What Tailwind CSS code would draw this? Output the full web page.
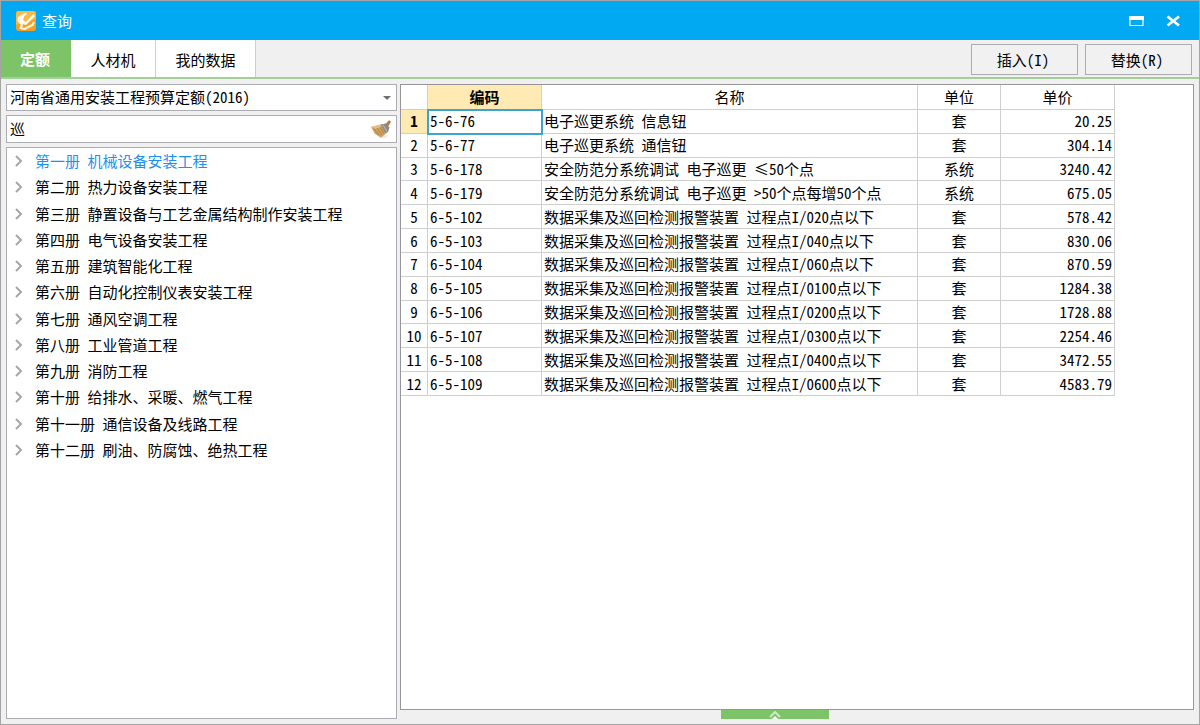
<!DOCTYPE html>
<html lang="zh-CN">
<head>
<meta charset="utf-8">
<meta name="viewport" content="width=device-width, initial-scale=1">
<title>查询</title>
<script src="https://cdn.jsdelivr.net/npm/@tailwindcss/browser@4"></script>
</head>
<body class="flex h-screen flex-col overflow-hidden border border-[#a5a5a5] bg-[#f0f0f0] font-['Noto_Sans_CJK_SC',sans-serif] text-[15px] leading-5 text-black [font-feature-settings:'hwid']">

<header class="flex h-[39px] shrink-0 items-center bg-[#00a9f1] pl-[15px] pr-[18px] text-white">
  <svg class="size-5" viewBox="0 0 20 20" aria-hidden="true">
    <rect width="20" height="20" rx="3" fill="#f5a11f"/>
    <path d="M0 3a3 3 0 0 1 3-3h14a3 3 0 0 1 3 3v5L0 14z" fill="#f9b84a"/>
    <path d="M10.500 2.500 3 6.500 2.500 9.500l3.500 4L4.500 17l4 1 8-4 1.500-3" fill="none" stroke="#fff3df" stroke-width="2.200" stroke-linejoin="round"/>
    <path d="M3.500 7 9 3l-2 6 3 2 7.500-8 1.500 2-9 9-5-1.500z" fill="#fff"/>
  </svg>
  <h1 class="ml-[6px] flex-1 text-[15px]">查询</h1>
  <div class="flex items-center gap-[22px]">
    <button type="button" aria-label="最大化"><svg class="h-5 w-[15px]" viewBox="0 0 15 20"><path d="M1 5.500h13v9H1z" fill="none" stroke="#fff" stroke-width="1.200"/><path d="M0 5h15v4H0z" fill="#fff"/></svg></button>
    <button type="button" aria-label="关闭"><svg class="h-5 w-[15px]" viewBox="0 0 15 20"><path d="m1.500 5.500 11.500 9m0-9-11.500 9" stroke="#fff" stroke-width="2.800"/></svg></button>
  </div>
</header>

<div class="flex h-[39px] shrink-0 items-stretch border-b-2 border-[#a5cf9a] pr-[7px]">
  <nav class="flex items-stretch" role="tablist">
    <button type="button" role="tab" aria-selected="true" class="w-[70px] bg-[#7dc367] pr-[2px] font-bold text-white">定额</button>
    <button type="button" role="tab" aria-selected="false" class="w-[85px] border-r border-[#b5e3a6] bg-white pt-[2px]">人材机</button>
    <button type="button" role="tab" aria-selected="false" class="w-[100px] border-r border-[#b5e3a6] bg-white pt-[2px]">我的数据</button>
  </nav>
  <div class="ml-auto flex gap-[7px] pb-[2px] pt-1">
    <button type="button" class="w-[107px] border border-[#adadad] bg-[#f1f1f1] pr-[3px]">插入(I)</button>
    <button type="button" class="w-[107px] border border-[#adadad] bg-[#f1f1f1] pr-[3px]">替换(R)</button>
  </div>
</div>

<main class="flex min-h-0 flex-1 gap-[3px] pl-[5px] pr-[5px] pt-[5px]">
  <section class="flex w-[391px] shrink-0 flex-col gap-1 pb-[5px]">
    <div class="relative h-[27px] shrink-0">
      <select aria-label="定额库" class="h-full w-full appearance-none border border-[#abadb3] bg-white pb-[2px] pl-[3px] pr-6">
        <option>河南省通用安装工程预算定额(2016)</option>
      </select>
      <svg class="pointer-events-none absolute right-[6px] top-3 h-1 w-2" viewBox="0 0 8 4" aria-hidden="true"><path d="M0 0h8L4 4z" fill="#707070"/></svg>
    </div>
    <div class="flex h-[28px] shrink-0 items-center border border-[#abadb3] bg-white pl-[3px] pr-[5px]">
      <input type="text" aria-label="搜索" value="巡" class="min-w-0 flex-1 outline-none">
      <button type="button" aria-label="清空">
        <svg class="h-[18px] w-5" viewBox="0 0 20 18">
          <path d="M7 15.500h11l-4 2.500H8z" fill="#e8e8e8"/>
          <path d="m14 4.500 4-4.300 2 1.500-3 5z" fill="#b57a45"/>
          <path d="M0 7 10 4.500l6 6-2 4-4 3-6-3.500z" fill="#cfa262"/>
          <path d="M0 7 10 4.500 11 7 4 9z" fill="#e6bd80"/>
          <path d="M9.500 4.500 15 3.500l3.500 4-1.500 4.500-2.500 1.500z" fill="#8f8780"/>
          <path d="m12 5 4 6.500" stroke="#bdb6af" stroke-width="1.200"/>
          <path d="m3 8.500 5 7M6 8l5 7M9 7l4 6.500" fill="none" stroke="#a87b3e" stroke-width=".8"/>
        </svg>
      </button>
    </div>
    <div class="min-h-0 flex-1 overflow-hidden border border-[#abadb3] bg-white">
      <ul role="tree" class="grid h-[315px] auto-rows-fr items-center pl-2">
        <li role="treeitem" class="flex items-center gap-3 text-[#1e90ee]"><svg class="h-3 w-2" viewBox="0 0 8 12"><path d="m1 1 5 5-5 5" fill="none" stroke="#a6a6a6" stroke-width="2"/></svg>第一册 机械设备安装工程</li>
        <li role="treeitem" class="flex items-center gap-3"><svg class="h-3 w-2" viewBox="0 0 8 12"><path d="m1 1 5 5-5 5" fill="none" stroke="#a6a6a6" stroke-width="2"/></svg>第二册 热力设备安装工程</li>
        <li role="treeitem" class="flex items-center gap-3"><svg class="h-3 w-2" viewBox="0 0 8 12"><path d="m1 1 5 5-5 5" fill="none" stroke="#a6a6a6" stroke-width="2"/></svg>第三册 静置设备与工艺金属结构制作安装工程</li>
        <li role="treeitem" class="flex items-center gap-3"><svg class="h-3 w-2" viewBox="0 0 8 12"><path d="m1 1 5 5-5 5" fill="none" stroke="#a6a6a6" stroke-width="2"/></svg>第四册 电气设备安装工程</li>
        <li role="treeitem" class="flex items-center gap-3"><svg class="h-3 w-2" viewBox="0 0 8 12"><path d="m1 1 5 5-5 5" fill="none" stroke="#a6a6a6" stroke-width="2"/></svg>第五册 建筑智能化工程</li>
        <li role="treeitem" class="flex items-center gap-3"><svg class="h-3 w-2" viewBox="0 0 8 12"><path d="m1 1 5 5-5 5" fill="none" stroke="#a6a6a6" stroke-width="2"/></svg>第六册 自动化控制仪表安装工程</li>
        <li role="treeitem" class="flex items-center gap-3"><svg class="h-3 w-2" viewBox="0 0 8 12"><path d="m1 1 5 5-5 5" fill="none" stroke="#a6a6a6" stroke-width="2"/></svg>第七册 通风空调工程</li>
        <li role="treeitem" class="flex items-center gap-3"><svg class="h-3 w-2" viewBox="0 0 8 12"><path d="m1 1 5 5-5 5" fill="none" stroke="#a6a6a6" stroke-width="2"/></svg>第八册 工业管道工程</li>
        <li role="treeitem" class="flex items-center gap-3"><svg class="h-3 w-2" viewBox="0 0 8 12"><path d="m1 1 5 5-5 5" fill="none" stroke="#a6a6a6" stroke-width="2"/></svg>第九册 消防工程</li>
        <li role="treeitem" class="flex items-center gap-3"><svg class="h-3 w-2" viewBox="0 0 8 12"><path d="m1 1 5 5-5 5" fill="none" stroke="#a6a6a6" stroke-width="2"/></svg>第十册 给排水、采暖、燃气工程</li>
        <li role="treeitem" class="flex items-center gap-3"><svg class="h-3 w-2" viewBox="0 0 8 12"><path d="m1 1 5 5-5 5" fill="none" stroke="#a6a6a6" stroke-width="2"/></svg>第十一册 通信设备及线路工程</li>
        <li role="treeitem" class="flex items-center gap-3"><svg class="h-3 w-2" viewBox="0 0 8 12"><path d="m1 1 5 5-5 5" fill="none" stroke="#a6a6a6" stroke-width="2"/></svg>第十二册 刷油、防腐蚀、绝热工程</li>
      </ul>
    </div>
  </section>

  <section class="flex min-w-0 flex-1 flex-col pb-[5px]">
    <div class="min-h-0 flex-1 overflow-hidden border border-[#96969a] bg-white">
      <table class="h-[311px] w-[714px] table-fixed border-separate border-spacing-0 [&_td]:border-b [&_td]:border-r [&_td]:border-[#cfcfcf] [&_td]:px-[2px] [&_td]:py-0 [&_th]:border-b [&_th]:border-r [&_th]:border-[#cfcfcf] [&_th]:p-0 [&_th]:font-normal [&_td:nth-child(4)]:text-center [&_td:nth-child(5)]:text-right [&_td]:whitespace-nowrap">
        <colgroup><col class="w-[27px]"><col class="w-[114px]"><col class="w-[376px]"><col class="w-[83px]"><col class="w-[114px]"></colgroup>
        <thead>
          <tr class="h-[25px]"><th></th><th scope="col" class="bg-[#ffeab3] font-bold!">编码</th><th scope="col">名称</th><th scope="col">单位</th><th scope="col">单价</th></tr>
        </thead>
        <tbody>
          <tr><th scope="row" class="bg-[#ffeab3] font-bold!">1</th><td class="outline-2 -outline-offset-1 outline-[#3fa3cf]">5-6-76</td><td>电子巡更系统 信息钮</td><td>套</td><td>20.25</td></tr>
          <tr><th scope="row">2</th><td>5-6-77</td><td>电子巡更系统 通信钮</td><td>套</td><td>304.14</td></tr>
          <tr><th scope="row">3</th><td>5-6-178</td><td>安全防范分系统调试 电子巡更 ≤50个点</td><td>系统</td><td>3240.42</td></tr>
          <tr><th scope="row">4</th><td>5-6-179</td><td>安全防范分系统调试 电子巡更 &gt;50个点每增50个点</td><td>系统</td><td>675.05</td></tr>
          <tr><th scope="row">5</th><td>6-5-102</td><td>数据采集及巡回检测报警装置 过程点I/020点以下</td><td>套</td><td>578.42</td></tr>
          <tr><th scope="row">6</th><td>6-5-103</td><td>数据采集及巡回检测报警装置 过程点I/040点以下</td><td>套</td><td>830.06</td></tr>
          <tr><th scope="row">7</th><td>6-5-104</td><td>数据采集及巡回检测报警装置 过程点I/060点以下</td><td>套</td><td>870.59</td></tr>
          <tr><th scope="row">8</th><td>6-5-105</td><td>数据采集及巡回检测报警装置 过程点I/0100点以下</td><td>套</td><td>1284.38</td></tr>
          <tr><th scope="row">9</th><td>6-5-106</td><td>数据采集及巡回检测报警装置 过程点I/0200点以下</td><td>套</td><td>1728.88</td></tr>
          <tr><th scope="row">10</th><td>6-5-107</td><td>数据采集及巡回检测报警装置 过程点I/0300点以下</td><td>套</td><td>2254.46</td></tr>
          <tr><th scope="row">11</th><td>6-5-108</td><td>数据采集及巡回检测报警装置 过程点I/0400点以下</td><td>套</td><td>3472.55</td></tr>
          <tr><th scope="row">12</th><td>6-5-109</td><td>数据采集及巡回检测报警装置 过程点I/0600点以下</td><td>套</td><td>4583.79</td></tr>
        </tbody>
      </table>
    </div>
    <button type="button" aria-label="展开" class="mr-11 flex h-[9px] w-[108px] shrink-0 items-end justify-center self-center bg-[#7dc367]">
      <svg class="h-2 w-3" viewBox="0 0 12 8"><path d="m1 6 5-5 5 5" fill="none" stroke="#cfeac5" stroke-width="2"/><path d="m3 8 3-3 3 3z" fill="#fff"/></svg>
    </button>
  </section>
</main>
</body>
</html>
